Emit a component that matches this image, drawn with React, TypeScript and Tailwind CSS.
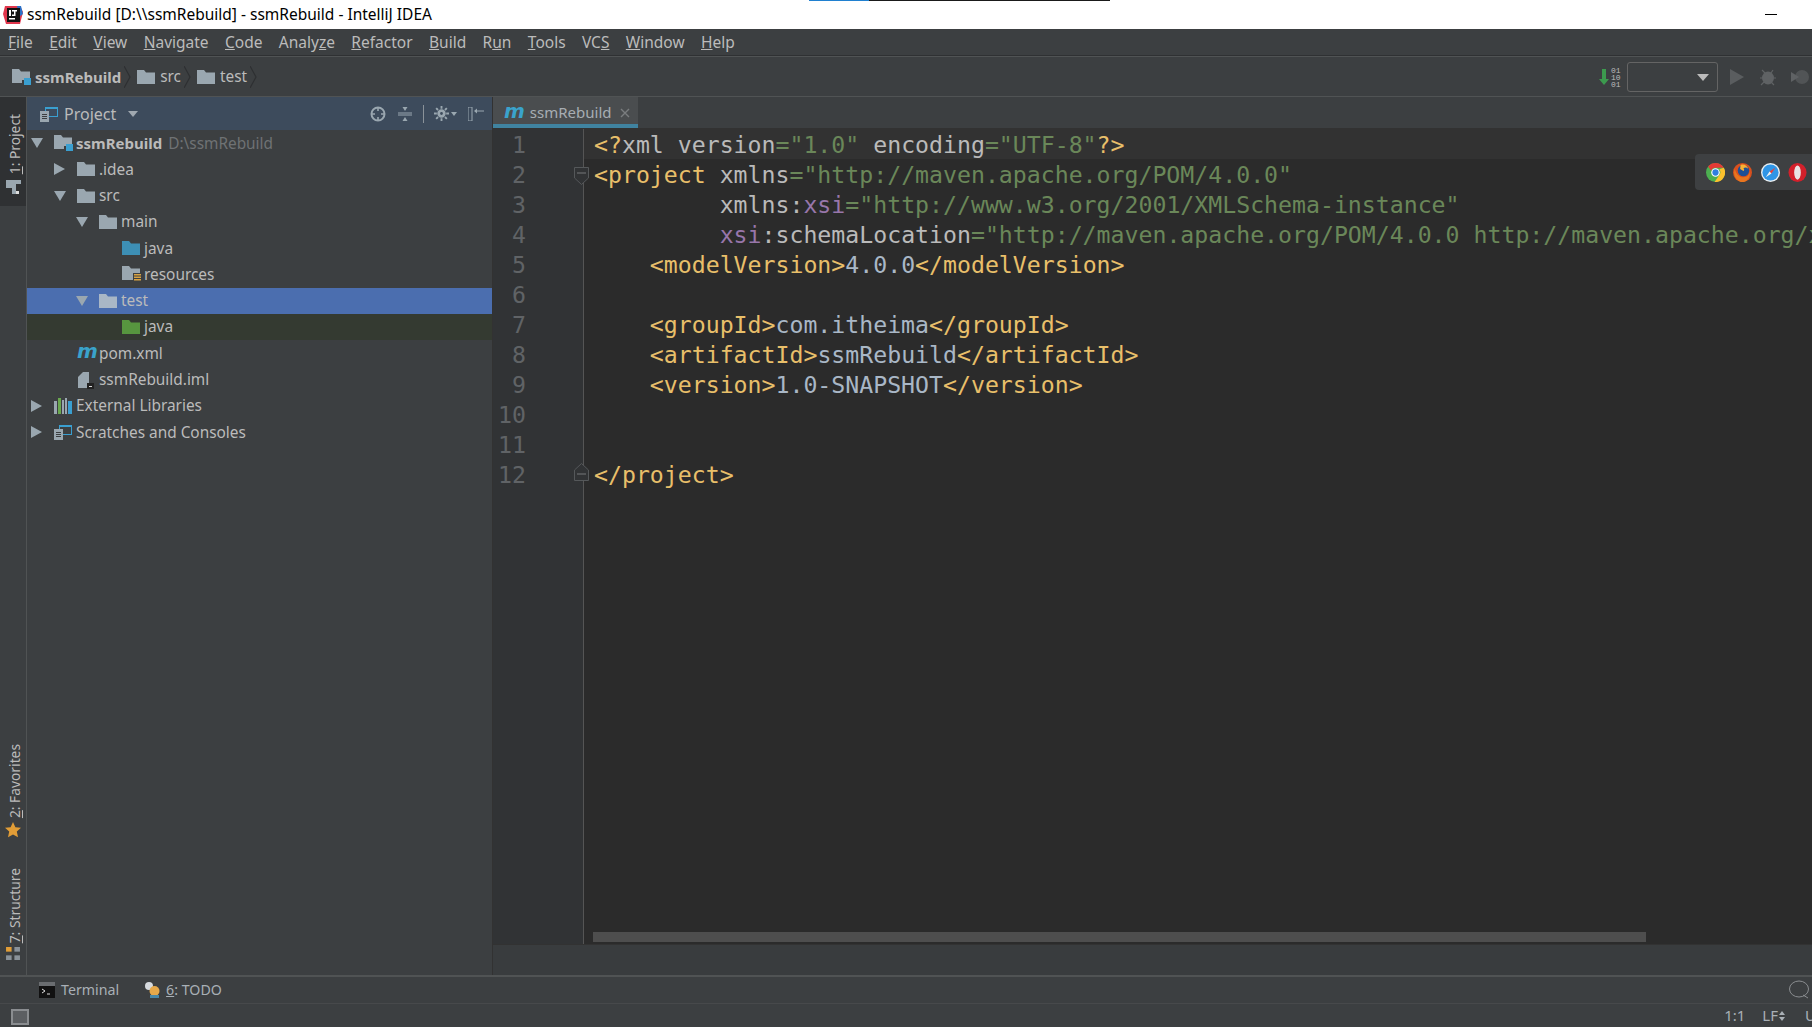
import React from 'react';

const Folder = ({ color = '#9aa7b0', className = '' }: { color?: string; className?: string }) => (
  <svg viewBox="0 0 18 14" className={`w-[18px] h-[14px] shrink-0 ${className}`}>
    <path d="M0 0h7l2 2.5h9V14H0z" fill={color} />
  </svg>
);

const ModuleFolder = () => (
  <svg viewBox="0 0 19 16" className="w-[19px] h-[16px] shrink-0">
    <path d="M0 0h7l2 2.5h9V11h-8v3H0z" fill="#9aa7b0" />
    <rect x="12" y="9" width="7" height="7" fill="#3a9fd0" />
  </svg>
);

const ResourceFolder = () => (
  <svg viewBox="0 0 19 16" className="w-[19px] h-[16px] shrink-0">
    <path d="M0 0h7l2 2.5h9V7h-7v7H0z" fill="#9aa7b0" />
    <path d="M12 8h7v1.5h-7zM12 10.5h7V12h-7zM12 13h7v1.5h-7z" fill="#d9a343" />
  </svg>
);

const MavenM = ({ className = '' }: { className?: string }) => (
  <span className={`font-['DejaVu_Sans'] italic font-bold text-[#3aa3cc] leading-none ${className}`}>m</span>
);

const FileIcon = () => (
  <svg viewBox="0 0 18 18" className="w-[18px] h-[18px] shrink-0">
    <path d="M1 6l5-5h6v16H1z" fill="#9aa7b0" />
    <rect x="10" y="12" width="7" height="6" fill="#222" />
    <rect x="12" y="15" width="3" height="1" fill="#ddd" />
  </svg>
);

const LibIcon = () => (
  <svg viewBox="0 0 18 16" className="w-[18px] h-[16px] shrink-0">
    <rect x="0" y="3" width="3" height="13" fill="#9aa7b0" />
    <rect x="4" y="0" width="3" height="16" fill="#6aa84f" />
    <rect x="8" y="2" width="2" height="14" fill="#9aa7b0" />
    <rect x="11" y="0" width="2" height="16" fill="#9aa7b0" />
    <rect x="14" y="3" width="4" height="13" fill="#3a9fd0" />
  </svg>
);

const ScratchIcon = ({ className = 'w-[18px] h-[16px]' }: { className?: string }) => (
  <svg viewBox="0 0 18 16" className={`shrink-0 ${className}`}>
    <path d="M5 1h13v10H9v-1h8V3H6v2H5z" fill="#3a9fd0" />
    <path d="M0 5h9v11H0z" fill="#9aa7b0" />
    <path d="M2 8h5v1H2zM2 10h5v1H2zM2 12h5v1H2z" fill="#3c3f41" />
  </svg>
);

const Down = () => (
  <svg viewBox="0 0 12 10" className="w-[12px] h-[10px]"><path d="M0 0h12L6 10z" fill="#9aa7b0" /></svg>
);
const Right = () => (
  <svg viewBox="0 0 11 12" className="w-[11px] h-[12px]"><path d="M0 0l11 6-11 6z" fill="#9aa7b0" /></svg>
);

const TreeRow = ({ pad, arrow, icon, bg = '', children }: { pad: string; arrow?: 'down' | 'right'; icon: React.ReactNode; bg?: string; children: React.ReactNode }) => (
  <div className={`h-[26.27px] flex items-center ${pad} ${bg}`}>
    <div className="w-[23px] shrink-0 flex items-center">
      {arrow === 'down' && <Down />}
      {arrow === 'right' && <Right />}
    </div>
    <div className="w-[22px] shrink-0 flex items-center">{icon}</div>
    <div className="whitespace-nowrap">{children}</div>
  </div>
);

const Tree = () => (
  <div className="text-[15.4px] text-[#bbbbbb]">
    <TreeRow pad="pl-[4px]" arrow="down" icon={<ModuleFolder />}>
      <b className="font-bold text-[15px]">ssmRebuild</b> <span className="text-[#6f7274] ml-[2px]">D:\ssmRebuild</span>
    </TreeRow>
    <TreeRow pad="pl-[27px]" arrow="right" icon={<Folder />}>.idea</TreeRow>
    <TreeRow pad="pl-[27px]" arrow="down" icon={<Folder />}>src</TreeRow>
    <TreeRow pad="pl-[49px]" arrow="down" icon={<Folder />}>main</TreeRow>
    <TreeRow pad="pl-[72px]" icon={<Folder color="#3d8fb5" />}>java</TreeRow>
    <TreeRow pad="pl-[72px]" icon={<ResourceFolder />}>resources</TreeRow>
    <TreeRow pad="pl-[49px]" arrow="down" icon={<Folder color="#a9b7c6" />} bg="bg-[#4b6eaf]">test</TreeRow>
    <TreeRow pad="pl-[72px]" icon={<Folder color="#57963f" />} bg="bg-[#343a31]">java</TreeRow>
    <TreeRow pad="pl-[27px]" icon={<MavenM className="text-[20px] -mt-[4px]" />}>pom.xml</TreeRow>
    <TreeRow pad="pl-[27px]" icon={<FileIcon />}>ssmRebuild.iml</TreeRow>
    <TreeRow pad="pl-[4px]" arrow="right" icon={<LibIcon />}>External Libraries</TreeRow>
    <TreeRow pad="pl-[4px]" arrow="right" icon={<ScratchIcon />}>Scratches and Consoles</TreeRow>
  </div>
);

const menus: [string, string][] = [
  ['F', 'ile'], ['E', 'dit'], ['V', 'iew'], ['N', 'avigate'], ['C', 'ode'], ['Analy', 'ze'], ['R', 'efactor'], ['B', 'uild'], ['Ru', 'n'], ['T', 'ools'], ['VC', 'S'], ['W', 'indow'], ['H', 'elp'],
];

const MenuBar = () => (
  <div className="h-[27px] shrink-0 bg-[#3c3f41] flex items-center gap-[16.4px] pl-[8px] pt-[2px] text-[15.5px] text-[#bbbbbb] border-b border-[#2f3133]">
    {menus.map(([a, b]) => {
      // the mnemonic letter is underlined, it is not always the first one
      if (a === 'Analy') return <span key={a}>Analy<u>z</u>e</span>;
      if (a === 'Ru') return <span key={a}>R<u>u</u>n</span>;
      if (a === 'VC') return <span key={a}>VC<u>S</u></span>;
      return <span key={a}><u>{a}</u>{b}</span>;
    })}
  </div>
);

const Chevron = () => (
  <svg viewBox="0 0 7 22" className="w-[7px] h-[22px] shrink-0 mx-[3px]"><path d="M0 0l6 11-6 11" fill="none" stroke="#2e3032" strokeWidth="1.2" /></svg>
);

const NavBar = () => (
  <div className="h-[41px] shrink-0 bg-[#3c3f41] border-t border-b border-[#505354] flex items-center pl-[12px] pt-[1px] text-[15.4px] text-[#bbbbbb]">
    <ModuleFolder />
    <b className="ml-[4px] font-bold text-[15px]">ssmRebuild</b>
    <Chevron />
    <Folder className="ml-[3px]" />
    <span className="ml-[5px]">src</span>
    <Chevron />
    <Folder className="ml-[3px]" />
    <span className="ml-[5px]">test</span>
    <Chevron />
    <div className="ml-auto flex items-center">
      <svg viewBox="0 0 10 16" className="w-[10px] h-[16px]"><path d="M3 0h4v10h3l-5 6-5-6h3z" fill="#3c9a4e" /></svg>
      <div className="ml-[2px] w-[10px] font-['Liberation_Mono'] text-[8px] leading-[7px] text-[#bbbbbb] mr-[6px]">01<br />10<br />01</div>
      <div className="w-[91px] h-[30px] border border-[#646464] rounded-[3px] flex items-center justify-end pr-[8px] mr-[12px]">
        <svg viewBox="0 0 12 7" className="w-[12px] h-[7px]"><path d="M0 0h12L6 7z" fill="#bbbbbb" /></svg>
      </div>
      <svg viewBox="0 0 14 16" className="w-[14px] h-[16px] mr-[16px]"><path d="M0 0l14 8-14 8z" fill="#5a5d5f" /></svg>
      <svg viewBox="0 0 18 18" className="w-[18px] h-[18px] mr-[13px]">
        <ellipse cx="8" cy="10" rx="6" ry="6.5" fill="#5f6264" />
        <path d="M2 2l3 3M13 2l-2 3M0 10h2M14 10h2M1 17l3-3M14 17l-3-3" stroke="#5f6264" strokeWidth="1.2" />
      </svg>
      <svg viewBox="0 0 18 18" className="w-[18px] h-[18px] mr-[3px]">
        <path d="M0 4l8 5-8 5z" fill="#5f6264" />
        <circle cx="11" cy="9" r="7" fill="#5f6264" fillOpacity="0.6" />
      </svg>
    </div>
  </div>
);

const Stripe = () => (
  <div className="w-[27px] shrink-0 bg-[#3c3f41] border-r border-[#505354] flex flex-col text-[13.8px] text-[#bbbbbb]">
    <div className="h-[109px] bg-[#2f3133] flex flex-col items-center justify-end pb-[12px] gap-[6px]">
      <span className="translate-x-[2px] [writing-mode:vertical-rl] rotate-180 whitespace-nowrap"><u>1</u>: Project</span>
      <svg viewBox="0 0 15 14" className="w-[15px] h-[14px] shrink-0"><path d="M0 0h15v4h-5v10H6V8H0z" fill="#9aa7b0" /><rect x="10" y="11" width="3" height="3" fill="#ddd" /></svg>
    </div>
    <div className="mt-auto flex flex-col items-center gap-[4px]">
      <span className="translate-x-[2px] [writing-mode:vertical-rl] rotate-180 whitespace-nowrap"><u>2</u>: Favorites</span>
      <svg viewBox="0 0 16 16" className="w-[16px] h-[16px]"><path d="M8 0l2.4 5.2 5.6.6-4.2 3.8 1.2 5.6L8 12.4 3 15.2l1.2-5.6L0 5.8l5.6-.6z" fill="#e19d37" /></svg>
    </div>
    <div className="mt-[30px] mb-[15px] flex flex-col items-center gap-[4px]">
      <span className="translate-x-[2px] [writing-mode:vertical-rl] rotate-180 whitespace-nowrap"><u>7</u>: Structure</span>
      <svg viewBox="0 0 15 14" className="w-[14px] h-[13px]">
        <rect x="0" y="0" width="6" height="5" fill="#e19d37" />
        <rect x="9" y="0" width="6" height="5" fill="#8a9299" />
        <rect x="0" y="9" width="6" height="5" fill="#8a9299" />
        <rect x="9" y="9" width="6" height="5" fill="#8a9299" />
      </svg>
    </div>
  </div>
);

const ProjectPanel = () => (
  <div className="w-[466px] shrink-0 bg-[#3c3f41] border-r border-[#323232] flex flex-col">
    <div className="h-[33px] shrink-0 bg-[#3d4b5c] flex items-center pl-[13px] text-[16px] text-[#bbbbbb]">
      <ScratchIcon />
      <span className="ml-[6px]">Project</span>
      <svg viewBox="0 0 10 6" className="w-[10px] h-[6px] ml-[12px]"><path d="M0 0h10L5 6z" fill="#a0a8b0" /></svg>
      <div className="ml-auto flex items-center pr-[8px]">
        <svg viewBox="0 0 16 16" className="w-[16px] h-[16px]">
          <circle cx="8" cy="8" r="6.5" fill="none" stroke="#9aa7b0" strokeWidth="2" />
          <path d="M8 1v4M8 11v4M1 8h4M11 8h4" stroke="#9aa7b0" strokeWidth="1.6" />
        </svg>
        <svg viewBox="0 0 14 16" className="w-[14px] h-[16px] ml-[12px]">
          <path d="M0 7h14M0 9h14" stroke="#9aa7b0" strokeWidth="1" />
          <path d="M7 5L4.5 1h5zM7 11l-2.5 4h5z" fill="#9aa7b0" />
        </svg>
        <div className="w-px h-[18px] bg-[#8a9299] ml-[11px]" />
        <svg viewBox="0 0 16 16" className="w-[15px] h-[15px] ml-[10px]">
          <circle cx="8" cy="8" r="3" fill="none" stroke="#9aa7b0" strokeWidth="3" />
          <path d="M8 0v3M8 13v3M0 8h3M13 8h3M2.3 2.3l2 2M11.700 11.700l2 2M2.300 13.700l2-2M11.700 4.300l2-2" stroke="#9aa7b0" strokeWidth="2" />
        </svg>
        <svg viewBox="0 0 6 4" className="w-[6px] h-[4px] ml-[2px]"><path d="M0 0h6L3 4z" fill="#9aa7b0" /></svg>
        <svg viewBox="0 0 16 14" className="w-[16px] h-[14px] ml-[11px]">
          <rect x="0" y="0" width="4" height="14" fill="none" stroke="#9aa7b0" />
          <path d="M7 4h9" stroke="#9aa7b0" />
          <path d="M6 4l3-2.500v5z" fill="#9aa7b0" />
        </svg>
      </div>
    </div>
    <Tree />
  </div>
);

const Tag = ({ children }: { children: React.ReactNode }) => <span className="text-[#e8bf6a]">{children}</span>;
const Val = ({ children }: { children: React.ReactNode }) => <span className="text-[#6a8759]">{children}</span>;
const Ns = ({ children }: { children: React.ReactNode }) => <span className="text-[#9876aa]">{children}</span>;

const lines: React.ReactNode[] = [
  <><Tag>&lt;?</Tag>xml version<Val>="1.0"</Val> encoding<Val>="UTF-8"</Val><Tag>?&gt;</Tag></>,
  <><Tag>&lt;project</Tag> xmlns<Val>="http://maven.apache.org/POM/4.0.0"</Val></>,
  <>         xmlns:<Ns>xsi</Ns><Val>="http://www.w3.org/2001/XMLSchema-instance"</Val></>,
  <>         <Ns>xsi</Ns>:schemaLocation<Val>="http://maven.apache.org/POM/4.0.0 http://maven.apache.org/xsd/maven-4.0.0.xsd"</Val><Tag>&gt;</Tag></>,
  <>    <Tag>&lt;modelVersion&gt;</Tag><span className="text-[#a9b7c6]">4.0.0</span><Tag>&lt;/modelVersion&gt;</Tag></>,
  '',
  <>    <Tag>&lt;groupId&gt;</Tag><span className="text-[#a9b7c6]">com.itheima</span><Tag>&lt;/groupId&gt;</Tag></>,
  <>    <Tag>&lt;artifactId&gt;</Tag><span className="text-[#a9b7c6]">ssmRebuild</span><Tag>&lt;/artifactId&gt;</Tag></>,
  <>    <Tag>&lt;version&gt;</Tag><span className="text-[#a9b7c6]">1.0-SNAPSHOT</span><Tag>&lt;/version&gt;</Tag></>,
  '',
  '',
  <Tag>&lt;/project&gt;</Tag>,
];

const FoldMark = ({ up }: { up?: boolean }) => (
  <svg viewBox="0 0 15 18" className={`absolute right-[-6px] w-[15px] h-[18px] ${up ? 'top-[4px]' : 'top-[8px]'}`}>
    <path d={up ? 'M0.500 17.500V7L7.500 0.500 14.500 7v10.500z' : 'M0.500 0.500h14V11l-7 6.500L0.500 11z'} fill="#313335" stroke="#55585a" />
    <path d={up ? 'M3 11h9' : 'M3 6h9'} stroke="#77797b" />
  </svg>
);

const Code = () => (
  <div className="flex-1 min-h-0 relative bg-[#2b2b2b] flex font-['DejaVu_Sans_Mono'] text-[23.2px] leading-[31px] overflow-hidden">
    <div className="w-[91px] shrink-0 bg-[#313335] border-r border-[#555555] text-[#606366] text-right pr-[57px] relative">
      {lines.map((_, i) => (
        <div key={i} className="h-[30px]">{i + 1}</div>
      ))}
      <div className="absolute right-0 top-[30px] h-[30px] w-0"><FoldMark /></div>
      <div className="absolute right-0 top-[330px] h-[30px] w-0"><FoldMark up /></div>
    </div>
    <div className="flex-1 min-w-0 text-[#bababa] whitespace-pre">
      {lines.map((l, i) => (
        <div key={i} className={`h-[30px] pl-[10px] ${i === 0 ? 'bg-[#323232]' : ''}`}>{l}</div>
      ))}
    </div>
    <div className="absolute left-[100px] bottom-[2px] w-[1053px] h-[10px] bg-[#4e4e4e]" />
  </div>
);

const BrowserIcons = () => (
  <div className="absolute right-0 top-[154px] w-[117px] h-[36px] bg-[#3e4042] rounded-l-[4px] flex items-center gap-[8.3px] pl-[11px] overflow-hidden">
    <svg viewBox="0 0 20 20" className="w-[19px] h-[19px] shrink-0">
      <circle cx="10" cy="10" r="10" fill="#4caf50" />
      <path d="M10 0a10 10 0 0 1 8.700 5H10a5 5 0 0 0-4.700 3.200L2.300 3.600A10 10 0 0 1 10 0z" fill="#e53935" />
      <path d="M18.700 5A10 10 0 0 1 9 20l4.500-6.500A5 5 0 0 0 14 6.500z" fill="#fbc02d" />
      <circle cx="10" cy="10" r="4.500" fill="#fff" />
      <circle cx="10" cy="10" r="3.300" fill="#2f7fe0" />
    </svg>
    <svg viewBox="0 0 20 20" className="w-[19px] h-[19px] shrink-0">
      <circle cx="10" cy="10" r="10" fill="#d9501e" />
      <circle cx="11" cy="8" r="6" fill="#1f4f96" />
      <path d="M2 6c1 7 7 11 13 8 1.500-1 2.500-3 2.500-5 1.500 5-2.500 11-7.500 11C4 20-1 12 2 6z" fill="#e8761f" />
      <path d="M8 2c3.500-1.500 7 0.500 8 4-2-1.500-3.500-1.500-5-0.500 1 1 1 2 0 3-1-1-2.500-1-3.500-2.500z" fill="#f9b233" />
    </svg>
    <svg viewBox="0 0 20 20" className="w-[19px] h-[19px] shrink-0">
      <circle cx="10" cy="10" r="10" fill="#e8eef2" />
      <circle cx="10" cy="10" r="8.500" fill="#2f95e6" />
      <path d="M15 5l-6 4 2 2z" fill="#e8413a" />
      <path d="M5 15l4-6 2 2z" fill="#eef2f5" />
    </svg>
    <svg viewBox="0 0 20 20" className="w-[19px] h-[19px] shrink-0">
      <ellipse cx="10" cy="10" rx="9.500" ry="10" fill="#d3202b" />
      <ellipse cx="10" cy="10" rx="3.500" ry="7.500" fill="#e9e3e3" />
    </svg>
  </div>
);

const App: React.FC = () => {
  return (
    <div className="w-[1812px] h-[1027px] relative overflow-hidden flex flex-col font-['Noto_Sans',sans-serif] bg-[#3c3f41]">
      <div className="absolute left-[809px] top-0 h-px w-[60px] bg-[#2080d0]" />
      <div className="absolute left-[869px] top-0 h-px w-[241px] bg-[#1a1a1a]" />

      {/* title bar */}
      <div className="h-[29px] shrink-0 bg-white flex items-center pl-[3px] text-[15.5px] text-black">
        <svg viewBox="0 0 20 20" className="w-[20px] h-[20px] shrink-0">
          <path d="M2 1h15l3 6-3 12H3L0 9z" fill="#e0364c" />
          <path d="M14 1h4l2 8-4 3z" fill="#2a70c8" />
          <rect x="4" y="3" width="13" height="14" fill="#111" />
          <rect x="6" y="13" width="6" height="1.500" fill="#fff" />
          <rect x="6" y="5" width="2" height="6" fill="#fff" />
          <path d="M9 5h5v1.500h-1.500v4.500H9V9.500h2V6.500H9z" fill="#fff" />
        </svg>
        <span className="ml-[4px]">ssmRebuild [D:\\ssmRebuild] - ssmRebuild - IntelliJ IDEA</span>
        <div className="ml-auto mr-[35px] w-[12px] h-px bg-black" />
      </div>

      <MenuBar />
      <NavBar />

      <div className="flex-1 min-h-0 flex">
        <Stripe />
        <ProjectPanel />
        <div className="flex-1 min-w-0 flex flex-col bg-[#3c3f41]">
          <div className="h-[32px] shrink-0 border-b border-[#323232] flex">
            <div className="w-[145px] h-[31px] bg-[#4a4d4f] border-b-[4px] border-[#4083a0] flex items-center pt-[4px] pl-[11px] text-[15px] text-[#a7adb3]">
              <MavenM className="text-[20px] -mt-[4px]" />
              <span className="ml-[5px]">ssmRebuild</span>
              <svg viewBox="0 0 10 10" className="w-[10px] h-[10px] ml-[8px]"><path d="M1 1l8 8M9 1l-8 8" stroke="#7a7d7f" strokeWidth="1.400" /></svg>
            </div>
          </div>
          <Code />
          <div className="h-[31px] shrink-0 bg-[#393c3e] border-t border-[#323232]" />
        </div>
      </div>

      {/* bottom tool windows */}
      <div className="h-[29px] shrink-0 border-t-2 border-b border-t-[#505354] border-b-[#47494b] flex items-center pl-[39px] text-[14.2px] text-[#a9b0b6]">
        <svg viewBox="0 0 16 16" className="w-[16px] h-[16px] shrink-0">
          <rect width="16" height="16" fill="#6a6d70" />
          <rect y="4" width="16" height="12" fill="#111" />
          <path d="M3 7l3 2-3 2M8 12h3" stroke="#ddd" fill="none" />
        </svg>
        <span className="ml-[6px]">Terminal</span>
        <svg viewBox="0 0 16 16" className="w-[16px] h-[16px] shrink-0 ml-[26px]">
          <circle cx="4" cy="4" r="4" fill="#d6dade" />
          <circle cx="9.500" cy="9" r="5" fill="#e6a94b" />
          <rect x="5" y="13" width="9" height="3" fill="#4a88a8" />
        </svg>
        <span className="ml-[5px]"><u>6</u>: TODO</span>
        <svg viewBox="0 0 22 20" className="w-[22px] h-[20px] ml-auto mr-[2px]">
          <ellipse cx="11" cy="9" rx="9.500" ry="8" fill="none" stroke="#8a8d90" />
          <path d="M15 15l5 3" stroke="#8a8d90" />
        </svg>
      </div>

      {/* status bar */}
      <div className="h-[23px] shrink-0 flex items-center pl-[11px] text-[15px] text-[#a9b0b6] overflow-hidden">
        <div className="w-[18px] h-[16px] mt-[3px] border-2 border-[#8a8d90] bg-[#5c5f62]" />
        <span className="ml-auto">1:1</span>
        <span className="ml-[17px]">LF</span>
        <svg viewBox="0 0 6 12" className="w-[6px] h-[12px] ml-[1px]"><path d="M0 5l3-4 3 4zM0 7l3 4 3-4z" fill="#a9b0b6" /></svg>
        <span className="ml-[20px] w-[7px] overflow-hidden">U</span>
      </div>

      <BrowserIcons />
    </div>
  );
};

export default App;
